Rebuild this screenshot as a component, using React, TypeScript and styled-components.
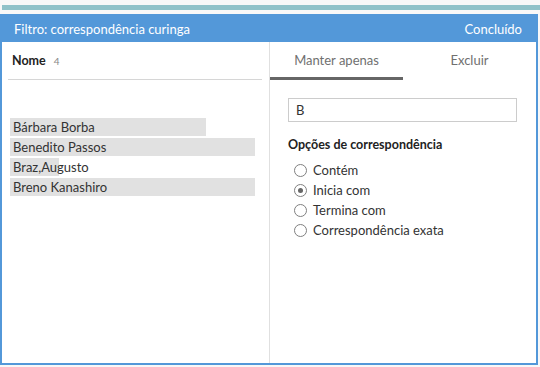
import styled, { createGlobalStyle } from "styled-components";

const GlobalStyle = createGlobalStyle`
    body {
        margin: 0;
        background: #f8f8f8;
        font-family: Lato, "Noto Sans", sans-serif;
    }
`

const Page = styled.div`
    width: 540px;
    height: 367px;
    padding-top: 5px;
    box-sizing: border-box;
`

const AccentBar = styled.div`
    height: 5px;
    margin-left: 2px;
    background: #90c2c9;
`

const Panel = styled.section`
    margin-top: 4px;
    width: 538px;
    height: 351px;
    box-sizing: border-box;
    border: 2px solid #5398d9;
    border-top: none;
    background: #fff;
    display: flex;
    flex-direction: column;
`

const Header = styled.header`
    height: 28px;
    margin: 0 -2px;
    padding: 1px 16px 0 14px;
    box-sizing: border-box;
    background: #5398d9;
    color: #fff;
    font-size: 13px;
    display: flex;
    align-items: center;
    justify-content: space-between;
`

const Body = styled.div`
    flex: 1;
    display: grid;
    grid-template-columns: 268px 1fr;
`

const LeftColumn = styled.div`
    border-right: 1px solid #e0e0e0;
    padding: 0 7px 0 6px;
`

const FieldHead = styled.div`
    height: 37px;
    padding-left: 4px;
    border-bottom: 1px solid #d6d6d6;
    display: flex;
    align-items: center;
    gap: 8px;
`

const FieldName = styled.span`
    font-size: 12.5px;
    font-weight: bold;
    color: #222;
`

const FieldCount = styled.span`
    font-size: 10px;
    color: #888;
`

const List = styled.div`
    margin-top: 38px;
    padding-left: 2px;
    display: flex;
    flex-direction: column;
    gap: 2px;
`

const Row = styled.div`
    position: relative;
    height: 18px;
    padding-left: 3px;
    font-size: 13px;
    color: #333;
    line-height: 18px;
    white-space: nowrap;
`

const RowBar = styled.div`
    position: absolute;
    left: 0;
    top: 0;
    height: 18px;
    background: #e1e1e1;
`

const RowText = styled.span`
    position: relative;
`

const RightColumn = styled.div`
    display: flex;
    flex-direction: column;
`

const Tabs = styled.div`
    display: grid;
    grid-template-columns: 133px 133px;
`

const Tab = styled.div<{ $active?: boolean }>`
    height: 35px;
    border-bottom: 3px solid ${p => p.$active ? "#666" : "transparent"};
    color: #707070;
    font-size: 13px;
    display: flex;
    align-items: center;
    justify-content: center;
`

const Content = styled.div`
    padding: 18px 19px 0 18px;
`

const SearchInput = styled.div`
    height: 24px;
    box-sizing: border-box;
    border: 1px solid #ccc;
    padding-left: 7px;
    font-size: 13px;
    color: #333;
    display: flex;
    align-items: center;
`

const OptionsTitle = styled.div`
    margin-top: 15px;
    font-size: 12.5px;
    font-weight: bold;
    color: #222;
`

const Options = styled.div`
    margin-top: 8px;
    padding-left: 6px;
    display: flex;
    flex-direction: column;
`

const Option = styled.label`
    height: 20px;
    display: flex;
    align-items: center;
    gap: 6px;
    font-size: 13px;
    color: #333;
`

const Radio = styled.span<{ $checked?: boolean }>`
    width: 13px;
    height: 13px;
    box-sizing: border-box;
    border: 1px solid #808080;
    border-radius: 50%;
    display: flex;
    align-items: center;
    justify-content: center;
    &::after {
        content: "";
        width: 5px;
        height: 5px;
        border-radius: 50%;
        background: ${p => p.$checked ? "#666" : "transparent"};
    }
`

const names = [
    { name: "Bárbara Borba", width: 196 },
    { name: "Benedito Passos", width: 245 },
    { name: "Braz,Augusto", width: 49 },
    { name: "Breno Kanashiro", width: 245 },
]

const options = ["Contém", "Inicia com", "Termina com", "Correspondência exata"]

export default function App() {
    return (
        <>
            <GlobalStyle />
            <Page>
                <AccentBar />
                <Panel>
                    <Header>
                        <span>Filtro: correspondência curinga</span>
                        <span>Concluído</span>
                    </Header>
                    <Body>
                        <LeftColumn>
                            <FieldHead>
                                <FieldName>Nome</FieldName>
                                <FieldCount>4</FieldCount>
                            </FieldHead>
                            <List>
                                {names.map(n => (
                                    <Row key={n.name}>
                                        <RowBar style={{ width: n.width }} />
                                        <RowText>{n.name}</RowText>
                                    </Row>
                                ))}
                            </List>
                        </LeftColumn>
                        <RightColumn>
                            <Tabs>
                                <Tab $active>Manter apenas</Tab>
                                <Tab>Excluir</Tab>
                            </Tabs>
                            <Content>
                                <SearchInput>B</SearchInput>
                                <OptionsTitle>Opções de correspondência</OptionsTitle>
                                <Options>
                                    {options.map(o => (
                                        <Option key={o}>
                                            <Radio $checked={o === "Inicia com"} />
                                            {o}
                                        </Option>
                                    ))}
                                </Options>
                            </Content>
                        </RightColumn>
                    </Body>
                </Panel>
            </Page>
        </>
    )
}
